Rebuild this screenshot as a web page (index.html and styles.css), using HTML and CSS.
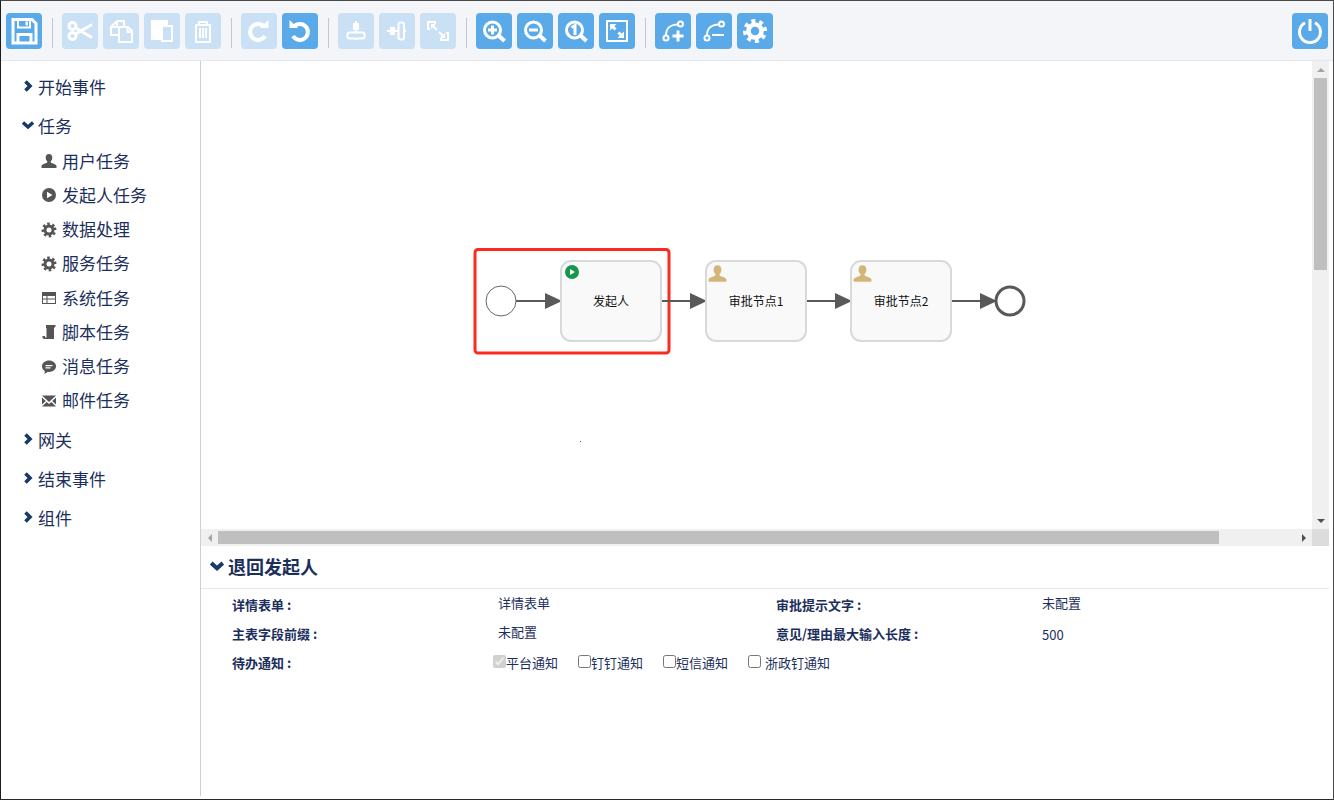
FILE: index.html
```html
<!DOCTYPE html>
<html lang="zh">
<head>
<meta charset="utf-8">
<title>流程设计</title>
<link rel="stylesheet" href="styles.css">
</head>
<body>
<svg class="sprite" xmlns="http://www.w3.org/2000/svg">
  <defs>
    <symbol id="i-user" viewBox="0 0 16 16"><path fill="currentColor" d="M8 1c2.200 0 3.300 1.700 3.300 3.800 0 1.500-.6 2.800-1.500 3.500v1.300c0 .6 4.700 1.300 5.700 3.100V15H.5v-2.300c1-1.800 5.700-2.500 5.700-3.100V8.300C5.300 7.600 4.700 6.300 4.700 4.800 4.700 2.700 5.800 1 8 1z"/></symbol>
    <symbol id="i-play" viewBox="0 0 16 16"><path fill="currentColor" fill-rule="evenodd" d="M8 1a7 7 0 1 1 0 14A7 7 0 0 1 8 1zM6 4.800v6.400L11.500 8z"/></symbol>
    <symbol id="i-gear" viewBox="0 0 16 16"><circle cx="8" cy="8" r="4" fill="none" stroke="currentColor" stroke-width="3"/><circle cx="8" cy="8" r="6" fill="none" stroke="currentColor" stroke-width="3" stroke-dasharray="2.360 2.350" transform="rotate(-22.500 8 8)"/></symbol>
    <symbol id="i-table" viewBox="0 0 16 16"><path fill="currentColor" fill-rule="evenodd" d="M1 2h14v12H1zM2 6v2.500h3.500V6zm4.500 0v2.500H14V6zM2 9.500V13h3.500V9.500zm4.500 0V13H14V9.500z"/></symbol>
    <symbol id="i-book" viewBox="0 0 16 16"><path fill="currentColor" d="M5 1h9.500v1.500L13 4v11H3.500C2 15 1.500 14 1.500 13.500V12H4v1.500h1.500V4H5z"/></symbol>
    <symbol id="i-chat" viewBox="0 0 16 16"><path fill="currentColor" fill-rule="evenodd" d="M8 1.500c3.900 0 7 2.500 7 5.800s-3.100 5.700-7 5.700c-.5 0-1 0-1.500-.1L3.500 15l.3-3C2 10.900 1 9.200 1 7.300 1 4 4.100 1.500 8 1.500zM4.500 6v1.300h7V6zm0 2.300v1.200h5V8.300z"/></symbol>
    <symbol id="i-mail" viewBox="0 0 16 16"><path fill="currentColor" d="M1 2.500h14L8 9zM1 4.500l3.800 3.600L1 11.500zM15 4.500v7l-3.800-3.400zM5.700 9L8 11l2.300-2 4.700 4.500H1z"/></symbol>
    <symbol id="i-right" viewBox="0 0 12 12"><path fill="none" stroke="currentColor" stroke-width="3.600" d="M3.500 1.500L8 6l-4.500 4.500"/></symbol>
    <symbol id="i-down" viewBox="0 0 12 12"><path fill="none" stroke="currentColor" stroke-width="3.400" d="M1 3.500L6 8l5-4.500"/></symbol>
  </defs>
</svg>
<div class="frame">
  <header class="toolbar">
    <button class="tool"><svg viewBox="0 0 36 36"><path class="ln w3" d="M7 6.500h19l4 4V30H7z"/><path class="ln" d="M12 7v7.500h12V7"/><path class="ln w3" d="M12 30v-8.500h13V30"/><path class="fl" d="M19.500 8.500h2.500v4h-2.500z"/></svg></button>
    <span class="sep"></span>
    <button class="tool off"><svg viewBox="0 0 36 36"><circle class="ln w3" cx="10.500" cy="13" r="3.500"/><circle class="ln w3" cx="10.500" cy="23" r="3.500"/><path class="ln w3" d="M13.500 15l16.500 9.500M13.500 21L30 11.500"/></svg></button>
    <button class="tool off"><svg viewBox="0 0 36 36"><path class="ln" d="M14 8h7v6M14 8l-6 6v8h8M14 8v6H8"/><path class="ln" d="M16 14h9l4 4v11H16zM24.500 14v5H29"/></svg></button>
    <button class="tool off"><svg viewBox="0 0 36 36"><path class="fl" d="M7 7h17v5H17v15H7z"/><path class="ln" d="M18 13h10v15H18z"/></svg></button>
    <button class="tool off"><svg viewBox="0 0 36 36"><path class="ln" d="M10 12h16M14 12V9h8v3M11 12v17h14V12"/><path class="ln" d="M15 15v10M18 15v10M21 15v10"/></svg></button>
    <span class="sep"></span>
    <button class="tool off"><svg viewBox="0 0 36 36"><path class="ln w4" d="M24 23a8 8 0 1 1-1-9.500"/><path class="fl" d="M19 15h8.500V7z"/></svg></button>
    <button class="tool"><svg viewBox="0 0 36 36"><path class="ln w4" d="M11 23a8 8 0 1 0 1-9.500"/><path class="fl" d="M16 15H7.500V7z"/></svg></button>
    <span class="sep"></span>
    <button class="tool off"><svg viewBox="0 0 36 36"><path class="ln" d="M18 8v19"/><path class="fl" d="M15 10h6v7h-6z"/><rect class="ln bg" x="9.500" y="19.500" width="17" height="6" rx="2"/></svg></button>
    <button class="tool off"><svg viewBox="0 0 36 36"><path class="ln" d="M8 18h19"/><path class="fl" d="M11 14h5v8h-5z"/><rect class="ln bg" x="19.500" y="9.500" width="5.500" height="17" rx="2"/></svg></button>
    <button class="tool off"><svg viewBox="0 0 36 36"><path class="ln" d="M15 11V9H8v7h2M21 25v2h7v-7h-2"/><path class="ln" d="M13 13l4 4M23 23l-4-4"/><path class="fl" d="M11 11h5l-5 5zM25 25h-5l5-5z"/></svg></button>
    <span class="sep"></span>
    <button class="tool"><svg viewBox="0 0 36 36"><circle class="ln w3" cx="16.500" cy="17" r="8"/><path class="ln w4" d="M23 23l5.500 5"/><path class="ln w3" d="M12 17h9M16.500 12.500v9"/></svg></button>
    <button class="tool"><svg viewBox="0 0 36 36"><circle class="ln w3" cx="16.500" cy="17" r="8"/><path class="ln w4" d="M23 23l5.500 5"/><path class="ln w3" d="M12 17h9"/></svg></button>
    <button class="tool"><svg viewBox="0 0 36 36"><circle class="ln w3" cx="16.500" cy="17" r="8"/><path class="ln w4" d="M23 23l5.500 5"/><path class="ln w3" d="M13.500 14.500l3.500-2V22"/></svg></button>
    <button class="tool"><svg viewBox="0 0 36 36"><path class="ln" d="M8 8h20v20H8z"/><path class="ln w3" d="M13 13l3.500 3.500M23 23l-3.500-3.500"/><path class="fl" d="M11 11h6.500L11 17.500zM25 25h-6.500l6.500-6.500z"/></svg></button>
    <span class="sep"></span>
    <button class="tool"><svg viewBox="0 0 36 36"><circle class="ln" cx="11" cy="25" r="2.500"/><circle class="ln" cx="25.500" cy="11" r="2.500"/><path class="ln" d="M11 22.500c0-7 3-10.500 12-11"/><path class="ln w3" d="M17.500 23h11M23 17.500v11"/></svg></button>
    <button class="tool"><svg viewBox="0 0 36 36"><circle class="ln" cx="11" cy="25" r="2.500"/><circle class="ln" cx="25.500" cy="11" r="2.500"/><path class="ln" d="M11 22.500c0-7 3-10.500 12-11"/><path class="ln" d="M16 22h12"/></svg></button>
    <button class="tool"><svg viewBox="0 0 36 36"><circle class="ln ring" cx="18" cy="18" r="6.500"/><circle class="ln w4 teeth" cx="18" cy="18" r="10" transform="rotate(-22.500 18 18)"/></svg></button>
    <span class="spring"></span>
    <button class="tool"><svg viewBox="0 0 36 36"><path class="ln w3" d="M13 9.800a10.500 10.500 0 1 0 10 0"/><path class="ln w3" d="M18 6v12"/></svg></button>
  </header>

  <div class="main">
    <nav class="side">
      <div class="head"><svg class="chev"><use href="#i-right"/></svg>开始事件</div>
      <div class="head"><svg class="chev"><use href="#i-down"/></svg>任务</div>
      <ul class="subs">
        <li class="sub"><svg class="ico"><use href="#i-user"/></svg>用户任务</li>
        <li class="sub"><svg class="ico"><use href="#i-play"/></svg>发起人任务</li>
        <li class="sub"><svg class="ico"><use href="#i-gear"/></svg>数据处理</li>
        <li class="sub"><svg class="ico"><use href="#i-gear"/></svg>服务任务</li>
        <li class="sub"><svg class="ico"><use href="#i-table"/></svg>系统任务</li>
        <li class="sub"><svg class="ico"><use href="#i-book"/></svg>脚本任务</li>
        <li class="sub"><svg class="ico"><use href="#i-chat"/></svg>消息任务</li>
        <li class="sub"><svg class="ico"><use href="#i-mail"/></svg>邮件任务</li>
      </ul>
      <div class="head"><svg class="chev"><use href="#i-right"/></svg>网关</div>
      <div class="head"><svg class="chev"><use href="#i-right"/></svg>结束事件</div>
      <div class="head"><svg class="chev"><use href="#i-right"/></svg>组件</div>
    </nav>

    <section class="work">
      <div class="stage">
        <div class="canvas">
          <svg class="diagram" viewBox="201 61 1111 468" xmlns="http://www.w3.org/2000/svg">
            <rect class="mark" x="475" y="249.500" width="194" height="103.500" rx="3"/>
            <circle class="start" cx="501" cy="301" r="15"/>
            <path class="flow" d="M516 301h30M661 301h30M806 301h30M951 301h30"/>
            <path class="head-tip" d="M545 293l17 8-17 8zM690 293l17 8-17 8zM835 293l17 8-17 8zM980 293l17 8-17 8z"/>
            <rect class="node" x="561" y="261" width="100" height="80" rx="10"/>
            <rect class="node" x="706" y="261" width="100" height="80" rx="10"/>
            <rect class="node" x="851" y="261" width="100" height="80" rx="10"/>
            <circle class="end" cx="1010" cy="301" r="14"/>
            <circle class="badge" cx="572" cy="272" r="7"/>
            <path class="badge-play" d="M570 269v6l5-3z"/>
            <use class="actor" href="#i-user" x="708" y="264" width="19" height="19"/>
            <use class="actor" href="#i-user" x="853" y="264" width="19" height="19"/>
            <text class="label" x="611" y="306">发起人</text>
            <text class="label" x="756" y="306">审批节点1</text>
            <text class="label" x="901" y="306">审批节点2</text>
            <rect class="speck" x="580" y="441" width="1" height="1"/>
          </svg>
        </div>
        <div class="vbar">
          <span class="sb-btn"><i class="tri up"></i></span>
          <span class="vthumb"></span>
          <span class="spring"></span>
          <span class="sb-btn"><i class="tri down"></i></span>
        </div>
      </div>
      <div class="hbar">
        <span class="sb-btn"><i class="tri left"></i></span>
        <span class="hthumb"></span>
        <span class="spring"></span>
        <span class="sb-btn"><i class="tri right"></i></span>
        <span class="corner"></span>
      </div>
      <h2 class="title"><svg class="chev-lg"><use href="#i-down"/></svg>退回发起人</h2>
      <div class="props">
        <b class="key">详情表单 :</b><span class="val">详情表单</span><b class="key">审批提示文字 :</b><span class="val">未配置</span>
        <b class="key">主表字段前缀 :</b><span class="val">未配置</span><b class="key">意见/理由最大输入长度 :</b><span class="num">500</span>
        <b class="key">待办通知 :</b>
        <div class="checks">
          <label class="check"><input type="checkbox" checked disabled>平台通知</label>
          <label class="check"><input type="checkbox">钉钉通知</label>
          <label class="check"><input type="checkbox">短信通知</label>
          <label class="check wide"><input type="checkbox">浙政钉通知</label>
        </div>
      </div>
    </section>
  </div>
</div>
</body>
</html>
```

FILE: styles.css
```css
* { box-sizing: border-box; }
html, body { margin: 0; height: 100%; }
body {
  font-family: "Noto Sans CJK SC", "Liberation Sans", sans-serif;
  color: #1c2f5c;
  background: #fff;
  overflow: hidden;
}
.sprite { position: absolute; width: 0; height: 0; }
.frame {
  width: 1334px;
  height: 800px;
  border: 1px solid #4a4a4a;
  border-left-color: #1c1c1c;
  border-bottom-color: #2a2a2a;
  display: flex;
  flex-direction: column;
}

/* toolbar */
.toolbar {
  flex: none;
  height: 60px;
  padding: 12px 5px 10px;
  background: #f3f5f9;
  border-bottom: 1px solid #e2e7f1;
  display: flex;
  align-items: flex-start;
  gap: 5px;
}
.tool {
  flex: none;
  width: 36px;
  height: 36px;
  padding: 0;
  border: 0;
  border-radius: 4px;
  background: #5aaae9;
}
.tool.off { background: #c9e0f5; }
.tool svg { display: block; width: 36px; height: 36px; }
.ln { fill: none; stroke: #fff; stroke-width: 2; }
.ln.bg { fill: #c9e0f5; }
.w3 { stroke-width: 3; }
.w4 { stroke-width: 4; }
.ring { stroke-width: 4.5; }
.teeth { stroke-dasharray: 3.93 3.92; }
.fl { fill: #fff; }
.sep {
  flex: none;
  width: 1px;
  height: 30px;
  margin: 5px 4px 0 5px;
  background: #c3c7cd;
}
.spring { flex: 1; }

/* layout */
.main { flex: 1; display: flex; min-height: 0; padding-bottom: 3px; }
.side {
  flex: none;
  width: 200px;
  padding-top: 5.5px;
  border-right: 1px solid #cfcfcf;
  font-size: 17px;
}
.head {
  height: 39px;
  display: flex;
  align-items: center;
  padding-left: 21px;
}
.chev { width: 12px; height: 12px; margin-right: 4px; color: #17396b; }
.subs { list-style: none; margin: -1.5px 0 2.5px; padding: 0; }
.sub {
  height: 34.25px;
  display: flex;
  align-items: center;
  padding-left: 40px;
}
.ico { width: 16px; height: 16px; margin: 2px 5px 0 0; color: #555; }

.work { flex: 1; min-width: 0; padding-right: 4px; display: flex; flex-direction: column; }
.stage { flex: none; height: 468px; display: flex; }
.canvas { flex: 1; position: relative; overflow: hidden; }
.diagram { position: absolute; left: 0; top: 0; width: 1111px; height: 468px; }
.mark { fill: none; stroke: #fb2a1e; stroke-width: 3; }
.start { fill: #fff; stroke: #666; stroke-width: 1; }
.end { fill: #fff; stroke: #595959; stroke-width: 3; }
.flow { fill: none; stroke: #595959; stroke-width: 2; }
.head-tip { fill: #595959; }
.node { fill: #f9f9f9; stroke: #d9d9d9; stroke-width: 2; }
.badge { fill: #17964f; }
.badge-play { fill: #fff; }
.actor { color: #d2b677; }
.label { font-size: 12px; fill: #111; text-anchor: middle; }
.speck { fill: #555; }

/* scrollbars */
.vbar {
  flex: none;
  width: 17px;
  background: #f0f0f0;
  display: flex;
  flex-direction: column;
}
.hbar { flex: none; height: 17px; background: #f0f0f0; display: flex; }
.sb-btn {
  flex: none;
  width: 17px;
  height: 17px;
  display: flex;
  align-items: center;
  justify-content: center;
}
.vthumb { flex: none; width: 13px; height: 192px; margin-left: 2px; background: #bfbfbf; }
.hthumb { flex: none; width: 1001px; height: 13px; margin-top: 2px; background: #bfbfbf; }
.corner { flex: none; width: 17px; background: #dcdcdc; }
.tri { width: 0; height: 0; border: 4px solid transparent; }
.tri.up { border-top: 0; border-bottom-color: #a3a3a3; }
.tri.down { border-bottom: 0; border-top-color: #505050; }
.tri.left { border-left: 0; border-right-color: #a3a3a3; }
.tri.right { border-right: 0; border-left-color: #505050; }

/* properties */
.title {
  flex: none;
  height: 43px;
  margin: 0;
  padding: 0 0 2px 9px;
  display: flex;
  align-items: center;
  gap: 4px;
  font-size: 18px;
  font-weight: 700;
  border-bottom: 1px solid #e2e7f1;
}
.chev-lg { width: 14px; height: 14px; color: #17396b; }
.props {
  display: grid;
  grid-template-columns: 266px 278px 266px 1fr;
  grid-auto-rows: 29px;
  margin-top: 1px;
  padding-left: 31px;
  font-size: 13px;
  line-height: 29px;
}
.key { font-weight: 700; font-size: 13px; }
.val { padding-bottom: 4px; line-height: 25px; }
.num { line-height: 31px; font-size: 13px; }
.checks { grid-column: 2 / 5; display: flex; margin-left: -5px; }
.check { width: 85px; display: flex; align-items: center; }
.check input { flex: none; width: 13px; height: 13px; margin: 0 0 2px; }
.check.wide input { margin-right: 4px; }
```
